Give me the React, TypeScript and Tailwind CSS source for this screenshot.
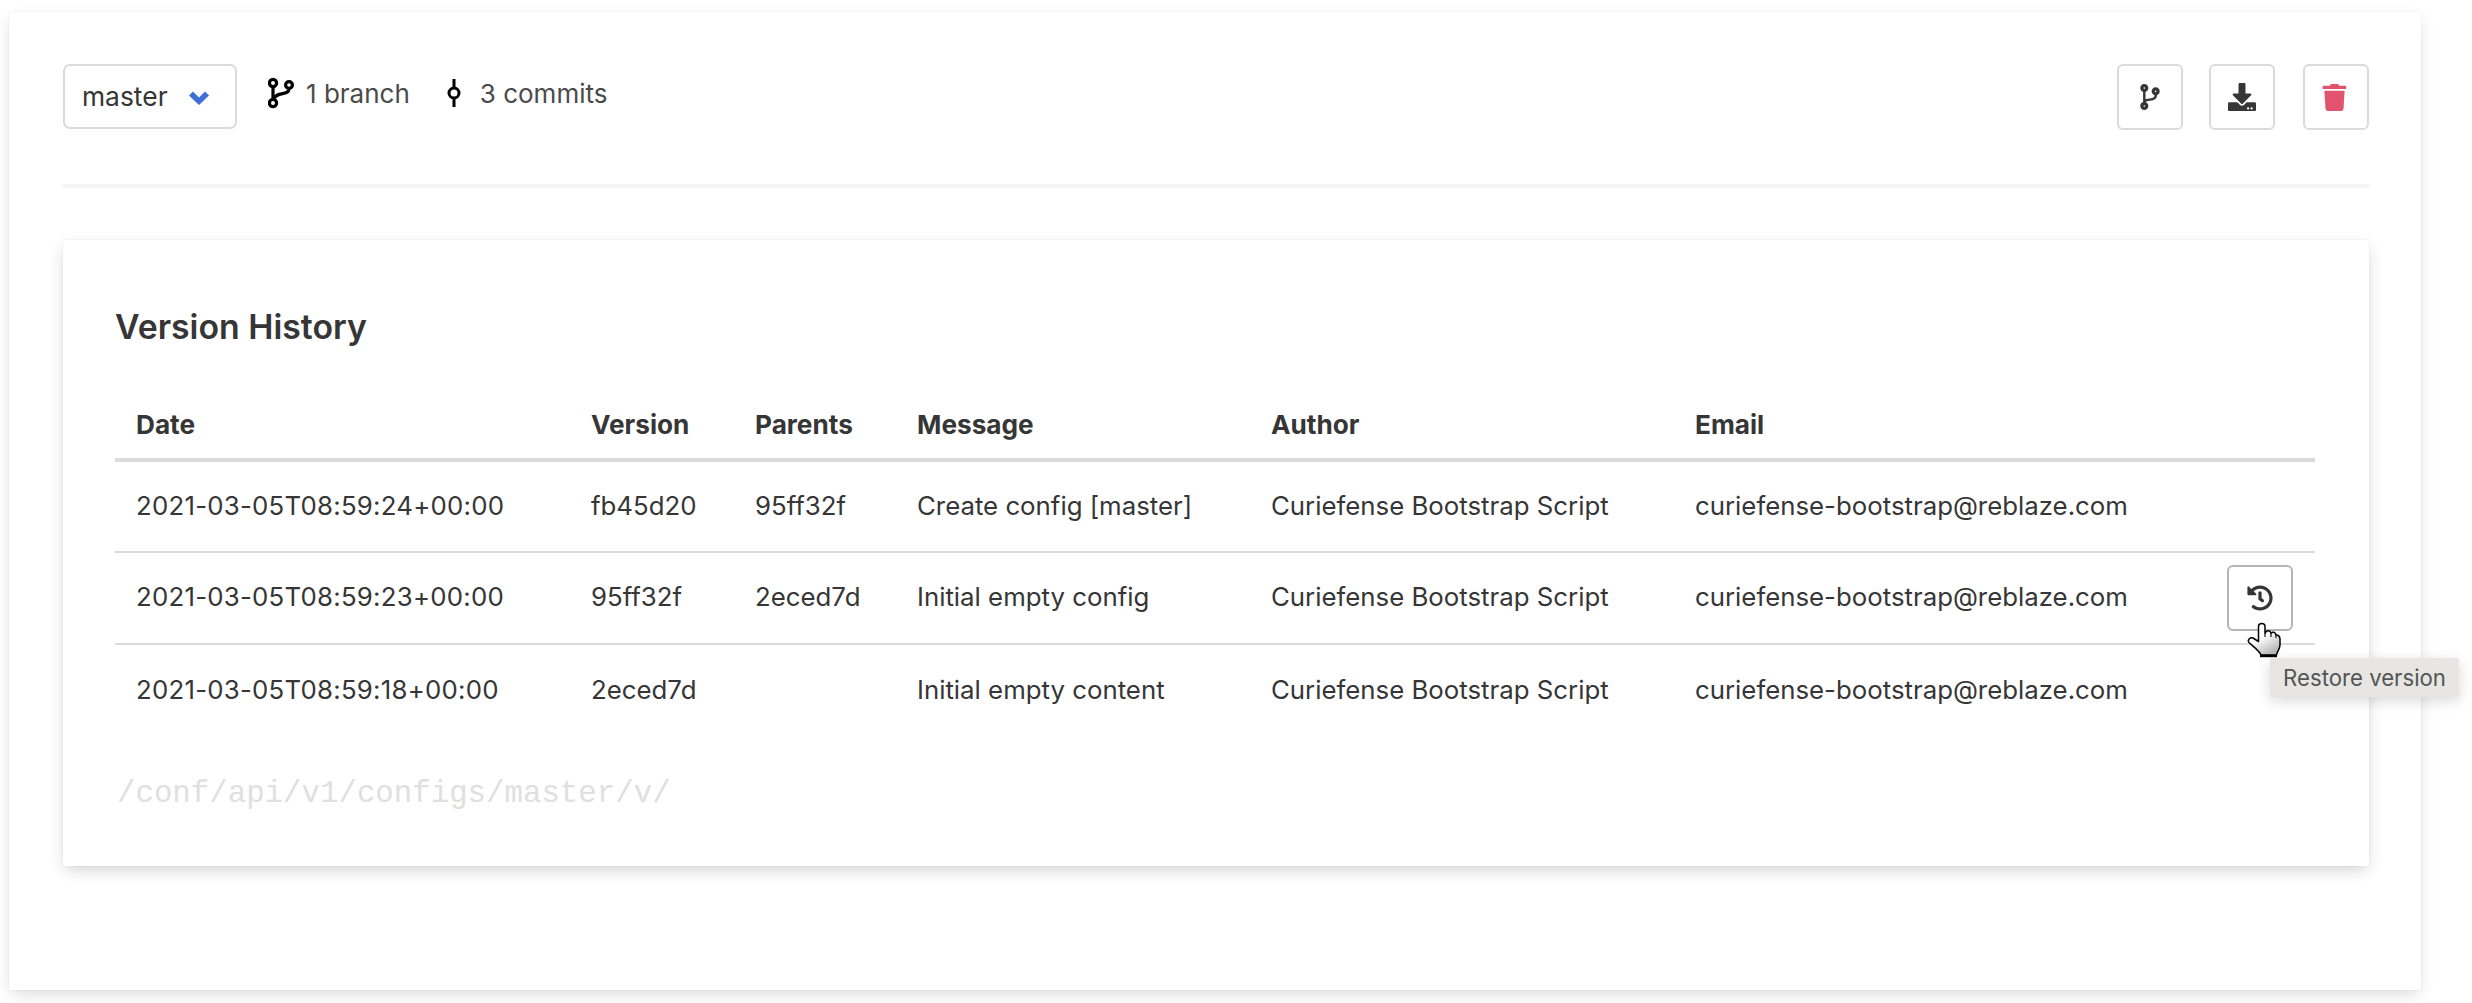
import React from "react";
import { FaCodeBranch, FaDownload, FaTrash, FaHistory } from "react-icons/fa";

const font = "font-['Inter','Liberation_Sans',sans-serif]";

function BranchIcon() {
  return (
    <svg width="26" height="32" viewBox="0 0 26 32" fill="none" stroke="#000" strokeWidth="3.2" className="shrink-0">
      <circle cx="5" cy="6" r="3.6" />
      <circle cx="5" cy="26" r="3.6" />
      <circle cx="21" cy="8" r="3.4" />
      <path d="M5 10V22" />
      <path d="M21 12C21 19 8 14 6 22" />
    </svg>
  );
}

function CommitIcon() {
  return (
    <svg width="14" height="28" viewBox="0 0 14 28" fill="none" stroke="#000" strokeWidth="3" className="block shrink-0">
      <circle cx="7" cy="14" r="5" />
      <path d="M7 0V9M7 19V28" />
    </svg>
  );
}

function HandCursor() {
  return (
    <svg width="35" height="36" viewBox="0 0 35 36" className="absolute left-[20px] top-[57px]">
      <defs>
        <linearGradient id="hand" x1="0" y1="0" x2="0.6" y2="1">
          <stop offset="0.5" stopColor="#ffffff" />
          <stop offset="1" stopColor="#b8b8b8" />
        </linearGradient>
      </defs>
      <path
        d="M11.500 4.500C11.500 0.500 18 0.500 18 4.500V11.500C19.500 8 23 8 24 11C25.500 9.500 28.500 10 29 13C30.500 12.500 33 14 33 17V23C33 27 30 29 29.500 33H14C12.500 29 7 25 2 20.500C0 18 3 15 6 16L11.500 19.500Z"
        fill="url(#hand)"
        stroke="#000"
        strokeWidth="1.500"
        strokeLinejoin="round"
      />
      <path d="M18 11.500V15M24 11V15M29 13V16" stroke="#000" strokeWidth="1.100" />
      <path d="M13 34H30" stroke="#000" strokeWidth="2.400" />
    </svg>
  );
}

const rows = [
  ["2021-03-05T08:59:24+00:00", "fb45d20", "95ff32f", "Create config [master]"],
  ["2021-03-05T08:59:23+00:00", "95ff32f", "2eced7d", "Initial empty config"],
  ["2021-03-05T08:59:18+00:00", "2eced7d", "", "Initial empty content"],
];

const headers = ["Date", "Version", "Parents", "Message", "Author", "Email"];
const widths = ["w-[455px]", "w-[164px]", "w-[162px]", "w-[354px]", "w-[424px]", "w-[532px]"];

export default function App() {
  return (
    <div className={`w-[2472px] h-[1003px] bg-white pt-[12px] pl-[9px] overflow-hidden text-[#363636] ${font}`}>
      <div className="w-[2412px] h-[978px] bg-white pl-[54px] pr-[52px] pt-[52px] shadow-[0_6px_16px_-3px_rgba(10,10,10,0.16),0_0_0_1px_rgba(10,10,10,0.02)]">
        <div className="flex justify-between items-start h-[66px]">
          <div className="flex items-start">
            <div className="w-[174px] h-[65px] flex items-center pl-[17px] border-2 border-[#dbdbdb] rounded-[7px] text-[26.4px]">
              <span>master</span>
              <svg width="20" height="14" viewBox="0 0 20 14" className="ml-[21px] mt-[2px]">
                <path d="M0 4.500L4 0.500L10 6.500L16 0.500L20 4.500L10 14Z" fill="#3e6fd8" />
              </svg>
            </div>
            <div className="flex items-center h-[58px] ml-[31px] text-[26px] text-[#4a4a4a]">
              <BranchIcon />
              <span className="ml-[12px]">1 branch</span>
              <span className="ml-[37px]"><CommitIcon /></span>
              <span className="ml-[19px]">3 commits</span>
            </div>
          </div>
          <div className="flex">
            <button className="w-[66px] h-[66px] border-2 border-[#dbdbdb] rounded-[6px] flex items-center justify-center">
              <FaCodeBranch size={26} className="text-[#363636]" />
            </button>
            <button className="ml-[26px] w-[66px] h-[66px] border-2 border-[#dbdbdb] rounded-[6px] flex items-center justify-center">
              <FaDownload size={28} className="text-[#363636]" />
            </button>
            <button className="ml-[28px] w-[66px] h-[66px] border-2 border-[#dbdbdb] rounded-[6px] flex items-center justify-center">
              <FaTrash size={27} className="text-[#e2536e] mr-[3px]" />
            </button>
          </div>
        </div>

        <div className="mt-[54px] h-[4px] bg-[#f5f5f5]" />

        <div className="mt-[52px] h-[626px] px-[52px] pt-[67px] bg-white shadow-[0_6px_16px_-3px_rgba(10,10,10,0.2),0_0_0_1px_rgba(10,10,10,0.02)]">
          <h2 className="text-[33.8px] leading-[40px] font-semibold text-[#363636]">Version History</h2>

          <table className="mt-[48px] w-[2200px] table-fixed border-collapse text-[25.8px] leading-[36px]">
            <thead>
              <tr className="h-[65px] border-b-4 border-[#dbdbdb]">
                {headers.map((h, i) => (
                  <th key={h} className={`${widths[i]} pl-[21px] pb-[3px] text-left text-[26.2px] font-bold align-middle`}>
                    {h}
                  </th>
                ))}
                <th className="w-[109px]" />
              </tr>
            </thead>
            <tbody>
              {rows.map((r, i) => (
                <tr key={r[0]} className={`h-[92px] ${i < 2 ? "border-b-2 border-[#dbdbdb]" : ""}`}>
                  {r.map((c, j) => (
                    <td
                      key={j}
                      className={j === 0 ? "pl-[21px] pb-[2px] align-middle whitespace-nowrap tracking-[0.24px]" : "pl-[21px] pb-[2px] align-middle whitespace-nowrap"}
                    >
                      {c}
                    </td>
                  ))}
                  <td className="pl-[21px] pb-[2px] align-middle whitespace-nowrap">Curiefense Bootstrap Script</td>
                  <td className="pl-[21px] pb-[2px] align-middle whitespace-nowrap">curiefense-bootstrap@reblaze.com</td>
                  <td className="pl-[21px] align-middle">
                    {i === 1 && (
                      <div className="relative w-[66px] h-[66px]">
                        <button className="w-[66px] h-[66px] border-2 border-[#b5b5b5] rounded-[6px] flex items-center justify-center">
                          <FaHistory size={26} className="text-[#363636]" />
                        </button>
                        <HandCursor />
                        <div className="absolute left-[43px] top-[93px] w-[189px] h-[39px] flex items-center justify-center bg-[#e8e6e3] rounded-[2px] text-[22.2px] text-[#555555] whitespace-nowrap shadow-[0_4px_14px_rgba(10,10,10,0.15)]">
                          Restore version
                        </div>
                      </div>
                    )}
                  </td>
                </tr>
              ))}
            </tbody>
          </table>

          <div className="mt-[40px] pl-[2px] font-['Liberation_Mono',monospace] text-[30.75px] leading-[36px] text-[#e0e0e0]">
            /conf/api/v1/configs/master/v/
          </div>
        </div>
      </div>
    </div>
  );
}
